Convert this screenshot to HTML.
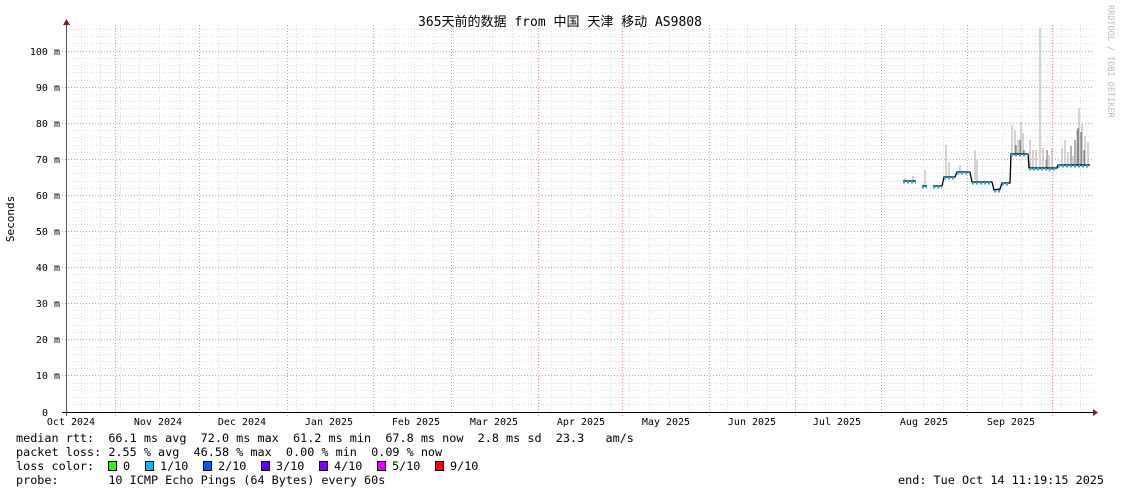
<!DOCTYPE html>
<html><head><meta charset="utf-8"><style>
html,body{margin:0;padding:0;background:#fff;width:1121px;height:494px;overflow:hidden}
svg{display:block}
text{font-family:"DejaVu Sans Mono","Liberation Mono","Noto Sans CJK SC",monospace;fill:#000;white-space:pre}
</style></head><body>
<svg width="1121" height="494" viewBox="0 0 1121 494" xmlns="http://www.w3.org/2000/svg" shape-rendering="crispEdges">
<rect width="1121" height="494" fill="#fff"/>
<path stroke="#dcdcdc" stroke-width="1" stroke-dasharray="1,2" fill="none" d="M66 404.5H1093M66 397.5H1093M66 390.5H1093M66 383.5H1093M66 368.5H1093M66 361.5H1093M66 354.5H1093M66 347.5H1093M66 332.5H1093M66 325.5H1093M66 318.5H1093M66 310.5H1093M66 296.5H1093M66 289.5H1093M66 282.5H1093M66 274.5H1093M66 260.5H1093M66 253.5H1093M66 245.5H1093M66 238.5H1093M66 224.5H1093M66 217.5H1093M66 209.5H1093M66 202.5H1093M66 188.5H1093M66 181.5H1093M66 173.5H1093M66 166.5H1093M66 152.5H1093M66 145.5H1093M66 137.5H1093M66 130.5H1093M66 116.5H1093M66 108.5H1093M66 101.5H1093M66 94.5H1093M66 80.5H1093M66 72.5H1093M66 65.5H1093M66 58.5H1093M66 43.5H1093M66 36.5H1093M66 29.5H1093"/>
<path stroke="#dcdcdc" stroke-width="1" stroke-dasharray="1,2" fill="none" d="M81.5 25V412M100.5 25V412M120.5 25V412M139.5 25V412M159.5 25V412M179.5 25V412M218.5 25V412M237.5 25V412M257.5 25V412M277.5 25V412M296.5 25V412M316.5 25V412M335.5 25V412M355.5 25V412M394.5 25V412M414.5 25V412M433.5 25V412M453.5 25V412M473.5 25V412M492.5 25V412M512.5 25V412M531.5 25V412M551.5 25V412M571.5 25V412M590.5 25V412M610.5 25V412M629.5 25V412M649.5 25V412M669.5 25V412M688.5 25V412M727.5 25V412M747.5 25V412M767.5 25V412M786.5 25V412M806.5 25V412M825.5 25V412M845.5 25V412M865.5 25V412M884.5 25V412M904.5 25V412M923.5 25V412M943.5 25V412M982.5 25V412M1002.5 25V412M1021.5 25V412M1041.5 25V412M1061.5 25V412M1080.5 25V412"/>
<path stroke="#e8a0a0" stroke-width="1" stroke-dasharray="1,2" fill="none" d="M62 375.5H1093M62 339.5H1093M62 303.5H1093M62 267.5H1093M62 231.5H1093M62 195.5H1093M62 159.5H1093M62 123.5H1093M62 87.5H1093M62 51.5H1093"/>
<path stroke="#f09090" stroke-width="1" stroke-dasharray="1,2" fill="none" d="M115.5 25V416M199.5 25V416M287.5 25V416M373.5 25V416M451.5 25V416M538.5 25V416M622.5 25V416M709.5 25V416M795.5 25V416M881.5 25V416M967.5 25V416M1052.5 25V416"/>
<path stroke="#aaa" stroke-width="1" fill="none" d="M905 178V183M913 176V183M925 170V187M946 145V178M949 162V178M960 165V172M975 150V180M977 160V182M996 188V192M1012 125V155M1015 130V155M1018 140V155M1021 122V155M1023 133V155M1030 140V170M1033 150V170M1036 150V170M1040 28V170M1043 148V170M1046 160V170M1049 155V172M1052 148V170M1062 148V166M1065 140V166M1068 152V166M1073 156V166M1077 130V166M1079 108V166M1082 124V166M1085 136V166M1088 142V166"/>
<path stroke="#666" stroke-width="1" fill="none" d="M1016 145V155M1020 140V155M1024 150V155M1047 150V170M1071 146V166M1075 140V166M1078 128V166M1081 132V166M1084 150V166"/>
<path stroke="#000" stroke-width="1.3" fill="none" shape-rendering="auto" d="M903 181H916M922 186H927M933 186H942L944 177H955L957 172H970L972 182H992L994 190L1000 189L1002 183H1010L1011 154H1028L1029 168H1057L1058 165H1090"/>
<path stroke="#1ab0f0" stroke-width="2.5" stroke-dasharray="2,2" fill="none" d="M903 182H916M922 187H927M933 187H942M944 178H955M957 173H970M972 183H992M994 191H1000M1002 184H1010M1011 155H1028M1029 169H1057M1058 166H1090"/>
<path stroke="#000" stroke-width="1" fill="none" d="M62 412.5H1093"/>
<path stroke="#555" stroke-width="1" fill="none" d="M66.5 25V416"/>
<path fill="#8b1a1a" shape-rendering="auto" d="M63 25L66.5 19L70 25Z M1093 409L1098 412.5L1093 416Z"/>
<g font-size="10" text-anchor="end">
<text x="60" y="55">100 m</text><text x="60" y="91">90 m</text><text x="60" y="127">80 m</text><text x="60" y="163">70 m</text><text x="60" y="199">60 m</text><text x="60" y="235">50 m</text><text x="60" y="271">40 m</text><text x="60" y="307">30 m</text><text x="60" y="343">20 m</text><text x="60" y="379">10 m</text><text x="48" y="416">0</text>
</g>
<g font-size="10" text-anchor="middle">
<text x="71" y="425">Oct 2024</text><text x="158" y="425">Nov 2024</text><text x="242" y="425">Dec 2024</text><text x="329" y="425">Jan 2025</text><text x="416" y="425">Feb 2025</text><text x="494" y="425">Mar 2025</text><text x="581" y="425">Apr 2025</text><text x="666" y="425">May 2025</text><text x="752" y="425">Jun 2025</text><text x="837" y="425">Jul 2025</text><text x="924" y="425">Aug 2025</text><text x="1011" y="425">Sep 2025</text>
</g>
<text x="560" y="26" font-size="13" text-anchor="middle">365天前的数据 from 中国 天津 移动 AS9808</text>
<text transform="translate(14,219) rotate(-90)" font-size="11" text-anchor="middle">Seconds</text>
<text transform="translate(1108,5) rotate(90)" font-size="8.5" style="fill:#bbb">RRDTOOL / TOBI OETIKER</text>
<g font-size="11.8">
<text x="16" y="442">median rtt:  66.1 ms avg  72.0 ms max  61.2 ms min  67.8 ms now  2.8 ms sd  23.3   am/s</text>
<text x="16" y="456">packet loss: 2.55 % avg  46.58 % max  0.00 % min  0.09 % now</text>
<text x="16" y="470">loss color:</text>
<text x="123" y="470">0</text><text x="160" y="470">1/10</text><text x="218" y="470">2/10</text><text x="276" y="470">3/10</text><text x="334" y="470">4/10</text><text x="392" y="470">5/10</text><text x="450" y="470">9/10</text>
<text x="16" y="484">probe:       10 ICMP Echo Pings (64 Bytes) every 60s</text>
<text x="1104" y="484" text-anchor="end">end: Tue Oct 14 11:19:15 2025</text>
</g>
<g stroke="#000" stroke-width="1">
<rect x="108.5" y="461.5" width="8" height="9" fill="#26ff00"/>
<rect x="145.5" y="461.5" width="8" height="9" fill="#00b8ff"/>
<rect x="203.5" y="461.5" width="8" height="9" fill="#0059ff"/>
<rect x="261.5" y="461.5" width="8" height="9" fill="#5e00ff"/>
<rect x="319.5" y="461.5" width="8" height="9" fill="#7e00ff"/>
<rect x="377.5" y="461.5" width="8" height="9" fill="#dd00ff"/>
<rect x="435.5" y="461.5" width="8" height="9" fill="#ff0000"/>
</g>
</svg>
</body></html>
